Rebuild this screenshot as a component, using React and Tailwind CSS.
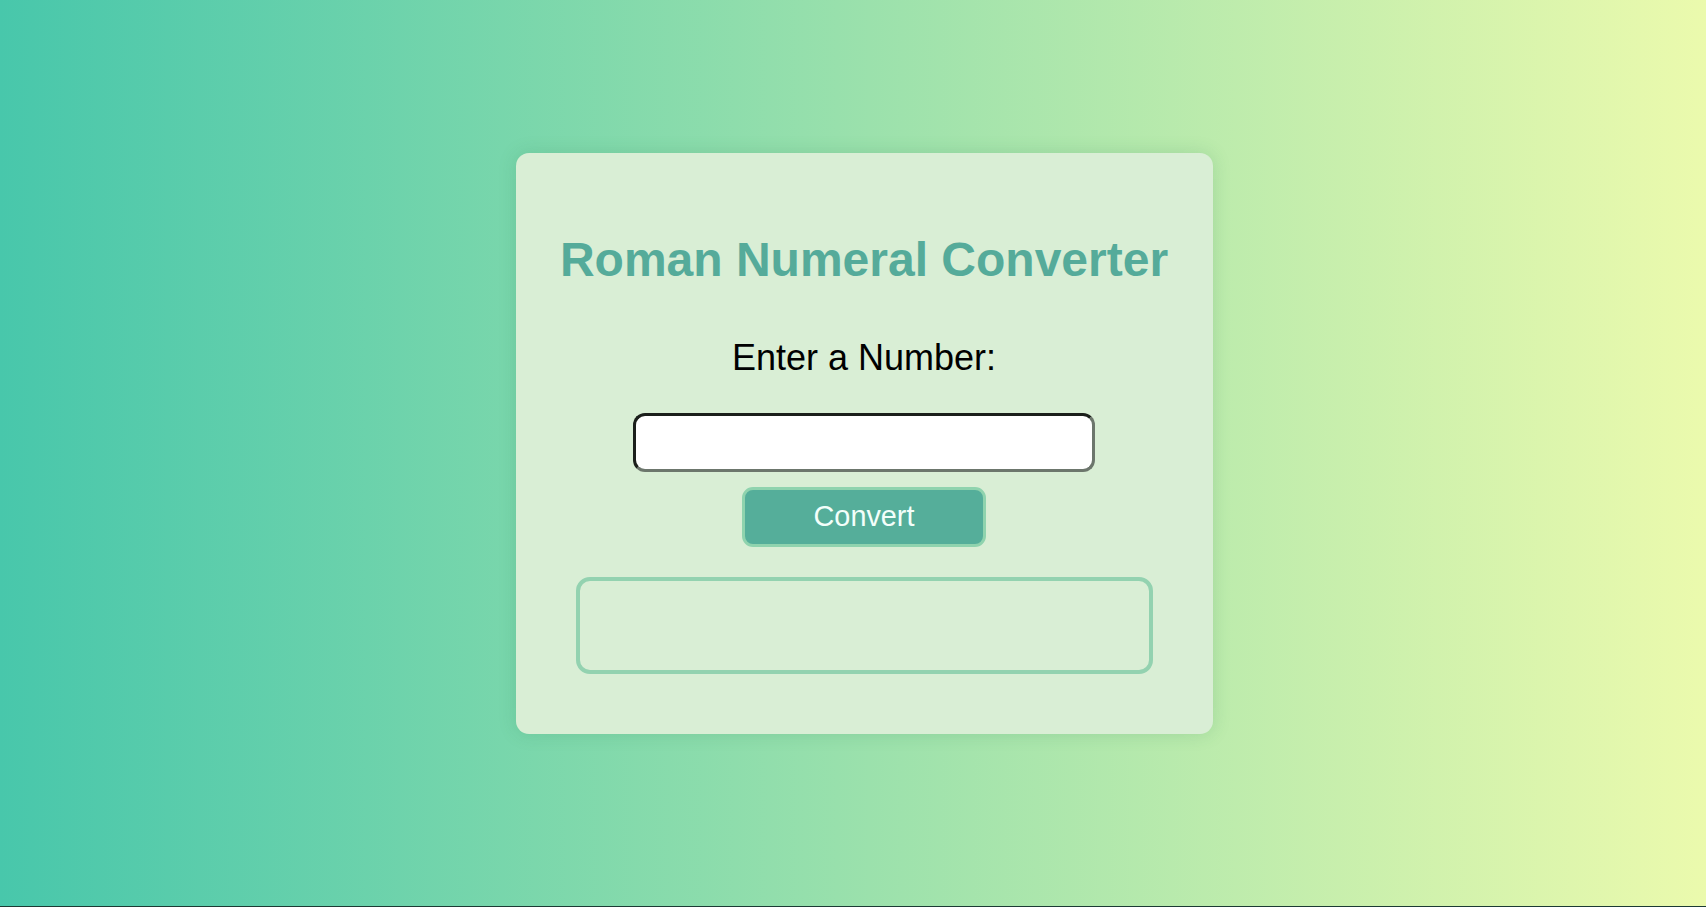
import React from 'react';

const App = () => {
  return (
    <div
      className="h-[907px] w-full border-b border-[#1c3a34] bg-[linear-gradient(to_right,#48c7ab,#ebfaad)] font-['Liberation_Sans',Arial,sans-serif]"
    >
      {/* Converter card */}
      <div className="flex justify-center pl-[22px] pt-[153px]">
        <main className="flex w-[697px] flex-col items-center rounded-[13px] bg-[#d9eed5] pt-[79px] pb-[60px] shadow-[0_0_18px_rgba(40,120,80,0.18)]">
          <h1 className="text-[48px] font-bold leading-[1.15] text-[#55ab9a]">
            Roman Numeral Converter
          </h1>

          <label
            htmlFor="number"
            className="mt-[50px] text-[36px] leading-[1.15] text-black"
          >
            Enter a Number:
          </label>

          <input
            id="number"
            type="number"
            className="mt-[34px] h-[59px] w-[462px] rounded-[12px] border-[3px] border-t-[#1b1f1b] border-l-[#1b1f1b] border-r-[#6c766c] border-b-[#6c766c] bg-white px-3 text-[28px] outline-none"
          />

          <button
            type="button"
            className="mt-[15px] h-[60px] w-[244px] rounded-[11px] border-[3px] border-[#8fd3ae] bg-[#55ae9a] text-[28.8px] leading-none text-[#f3fffa]"
          >
            Convert
          </button>

          {/* Result area */}
          <div className="mt-[30px] h-[97px] w-[577px] rounded-[14px] border-4 border-[#93d2b0]" />
        </main>
      </div>
    </div>
  );
};

export default App;
